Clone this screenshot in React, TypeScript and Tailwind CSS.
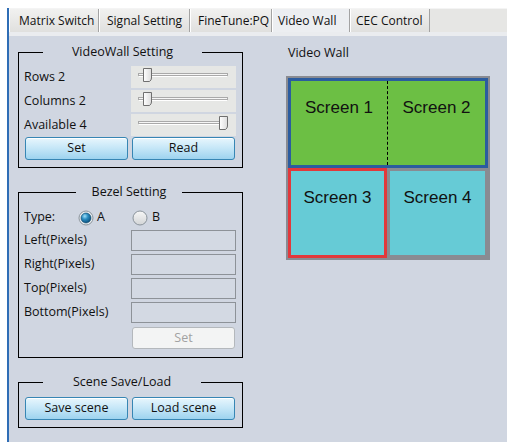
import React from "react";

const FONT = { fontFamily: '"Open Sans", "Noto Sans", "Liberation Sans", sans-serif' };

function Slider({ pos }: { pos: number }) {
  return (
    <div className="w-[105px] h-[22px] bg-[#e6e7e5]">
      <svg width="105" height="22" viewBox="0 0 105 22">
        <rect x="7.5" y="7.5" width="89" height="2" fill="#f6f6f6" stroke="#a9a9a9" strokeWidth="1" />
        <line x1="8" y1="10.5" x2="96" y2="10.5" stroke="#ffffff" strokeWidth="1" />
        <g transform={`translate(${pos},2)`}>
          <defs>
            <linearGradient id={`tg${pos}`} x1="0" y1="0" x2="1" y2="0">
              <stop offset="0" stopColor="#ffffff" />
              <stop offset="1" stopColor="#dcdcdc" />
            </linearGradient>
          </defs>
          <path d="M0.5 0.5 H8.5 V10 Q8.5 12 6.5 13.5 H0.5 V10 Z" fill={`url(#tg${pos})`} stroke="#6f6f6f" strokeWidth="1" />
        </g>
      </svg>
    </div>
  );
}

function Radio({ checked }: { checked: boolean }) {
  return (
    <svg width="16" height="16" viewBox="0 0 16 16">
      <defs>
        <radialGradient id="rsel" cx="0.38" cy="0.32" r="0.7">
          <stop offset="0" stopColor="#9fe0f8" />
          <stop offset="0.45" stopColor="#2a8cc0" />
          <stop offset="1" stopColor="#0a4f7c" />
        </radialGradient>
        <linearGradient id="runs" x1="0" y1="0" x2="0" y2="1">
          <stop offset="0" stopColor="#f7f7f7" />
          <stop offset="1" stopColor="#d2d4d6" />
        </linearGradient>
      </defs>
      <circle cx="8" cy="8" r="7" fill={checked ? "#e9edf0" : "url(#runs)"} stroke="#8b949c" strokeWidth="1" />
      {checked && <circle cx="8" cy="8" r="5" fill="url(#rsel)" stroke="#0d4466" strokeWidth="0.6" />}
    </svg>
  );
}

function Btn({ children }: { children: React.ReactNode }) {
  return (
    <div className="w-[103px] h-[23px] flex items-center justify-center rounded-[3px] border border-[#3786b4] bg-linear-to-b from-[#e8f6fd] via-[#c4e6f7] to-[#9dd3ef] shadow-[inset_0_1px_0_#ffffff] text-[12.5px] text-[#111]">
      {children}
    </div>
  );
}

function Input() {
  return <div className="w-[105px] h-[21px] border border-[#8d9298] bg-[#d3d9e3]" />;
}

function Legend({ text, ml, w }: { text: string; ml: string; w: string }) {
  return (
    <legend className={`${ml} text-left text-[12.5px] leading-[16px]`}>
      <div className={`${w} text-center`}>{text}</div>
    </legend>
  );
}

export default function App() {
  const tabs = [
    { t: "Matrix Switch", w: "w-[90px]", pl: "pl-[9px]" },
    { t: "Signal Setting", w: "w-[91px]", pl: "pl-[7px]" },
    { t: "FineTune:PQ", w: "w-[82px]", pl: "pl-[7px]" },
    { t: "Video Wall", w: "w-[78px]", pl: "pl-[5px]", sel: true },
    { t: "CEC Control", w: "w-[80px]", pl: "pl-[5px]" },
  ];
  return (
    <div className="w-[519px] h-[445px] bg-white pt-[8px] pl-[7px] text-[#111]" style={FONT}>
      <div className="w-[500px] h-[434px] border-l-2 border-[#2f6db5] flex flex-col">
        <div className="h-[24px] flex bg-[#e6e6e4] border-t border-[#f4f4f4]">
          {tabs.map((tb) => (
            <div
              key={tb.t}
              className={`${tb.w} ${tb.pl} h-full flex items-center text-[12px] border-r border-[#a3a3a3] border-l border-l-[#ffffff] ${
                tb.sel ? "bg-[#eceef1]" : "bg-linear-to-b from-[#f1f1f0] to-[#e0e0de]"
              }`}
            >
              {tb.t}
            </div>
          ))}
          <div className="flex-1" />
        </div>
        <div className="h-[4px] bg-[#eaecef]" />
        <div className="flex-1 bg-[#d0d6e1] flex">
          {/* left column */}
          <div className="ml-[9px] w-[225px] flex flex-col">
            <fieldset className="mt-[8px] border border-black px-[5px] pb-[7px]">
              <Legend text="VideoWall Setting" ml="ml-[19px]" w="w-[159px]" />
              <div className="mt-[6px] flex flex-col gap-[2px]">
                {[
                  ["Rows 2", 12],
                  ["Columns 2", 12],
                  ["Available 4", 88],
                ].map(([l, p]) => (
                  <div key={l as string} className="h-[22px] flex items-center">
                    <div className="w-[107px] text-[12.5px]">{l}</div>
                    <Slider pos={p as number} />
                  </div>
                ))}
                <div className="mt-[-1px] flex gap-[4px] ml-[1px]">
                  <Btn>Set</Btn>
                  <Btn>Read</Btn>
                </div>
              </div>
            </fieldset>

            <fieldset className="mt-[16px] border border-black px-[5px] pb-[8px]">
              <Legend text="Bezel Setting" ml="ml-[52px]" w="w-[106px]" />
              <div className="mt-[6px] flex flex-col gap-[3px] text-[12.5px]">
                <div className="h-[21px] flex items-center pt-[2px]">
                  <div className="w-[54px]">Type:</div>
                  <Radio checked />
                  <div className="ml-[3px] w-[35px]">A</div>
                  <Radio checked={false} />
                  <div className="ml-[4px]">B</div>
                </div>
                {["Left(Pixels)", "Right(Pixels)", "Top(Pixels)", "Bottom(Pixels)"].map((l) => (
                  <div key={l} className="h-[21px] flex items-center">
                    <div className="w-[107px]">{l}</div>
                    <Input />
                  </div>
                ))}
                <div className="mt-[1px] ml-[108px] w-[103px] h-[22px] flex items-center justify-center rounded-[3px] border border-[#b4b8bc] bg-[#f3f4f4] text-[#a2a2a2]">
                  Set
                </div>
              </div>
            </fieldset>

            <fieldset className="mt-[16px] border border-black px-[5px] pb-[7px]">
              <Legend text="Scene Save/Load" ml="ml-[19px]" w="w-[158px]" />
              <div className="mt-[7px] flex gap-[4px] ml-[1px]">
                <Btn>Save scene</Btn>
                <Btn>Load scene</Btn>
              </div>
            </fieldset>
          </div>

          {/* right column */}
          <div className="ml-[43px] flex flex-col">
            <div className="mt-[9px] pl-[2px] text-[12.5px] leading-[16px]">Video Wall</div>
            <div
              className="mt-[15px] w-[204px] h-[184px] bg-[#898b92] p-[2px] flex flex-col"
              style={{ fontFamily: '"Liberation Sans", Arial, sans-serif' }}
            >
              <div className="h-[90px] border-[3px] border-[#2b5c9f] bg-[#6cbf44] flex">
                <div className="w-[97px] border-r border-dashed border-black flex justify-center pt-[17px] text-[17px] leading-[20px]">
                  Screen 1
                </div>
                <div className="flex-1 flex justify-center pt-[17px] text-[17px] leading-[20px]">Screen 2</div>
              </div>
              <div className="h-[90px] flex">
                <div className="w-[99px] border-[3px] border-[#e2383b] bg-[#66cbd6] flex justify-center pt-[17px] text-[17px] leading-[20px]">
                  Screen 3
                </div>
                <div className="flex-1 p-[3px] flex">
                  <div className="flex-1 bg-[#66cbd6] flex justify-center pt-[17px] text-[17px] leading-[20px]">Screen 4</div>
                </div>
              </div>
            </div>
          </div>
        </div>
      </div>
    </div>
  );
}
